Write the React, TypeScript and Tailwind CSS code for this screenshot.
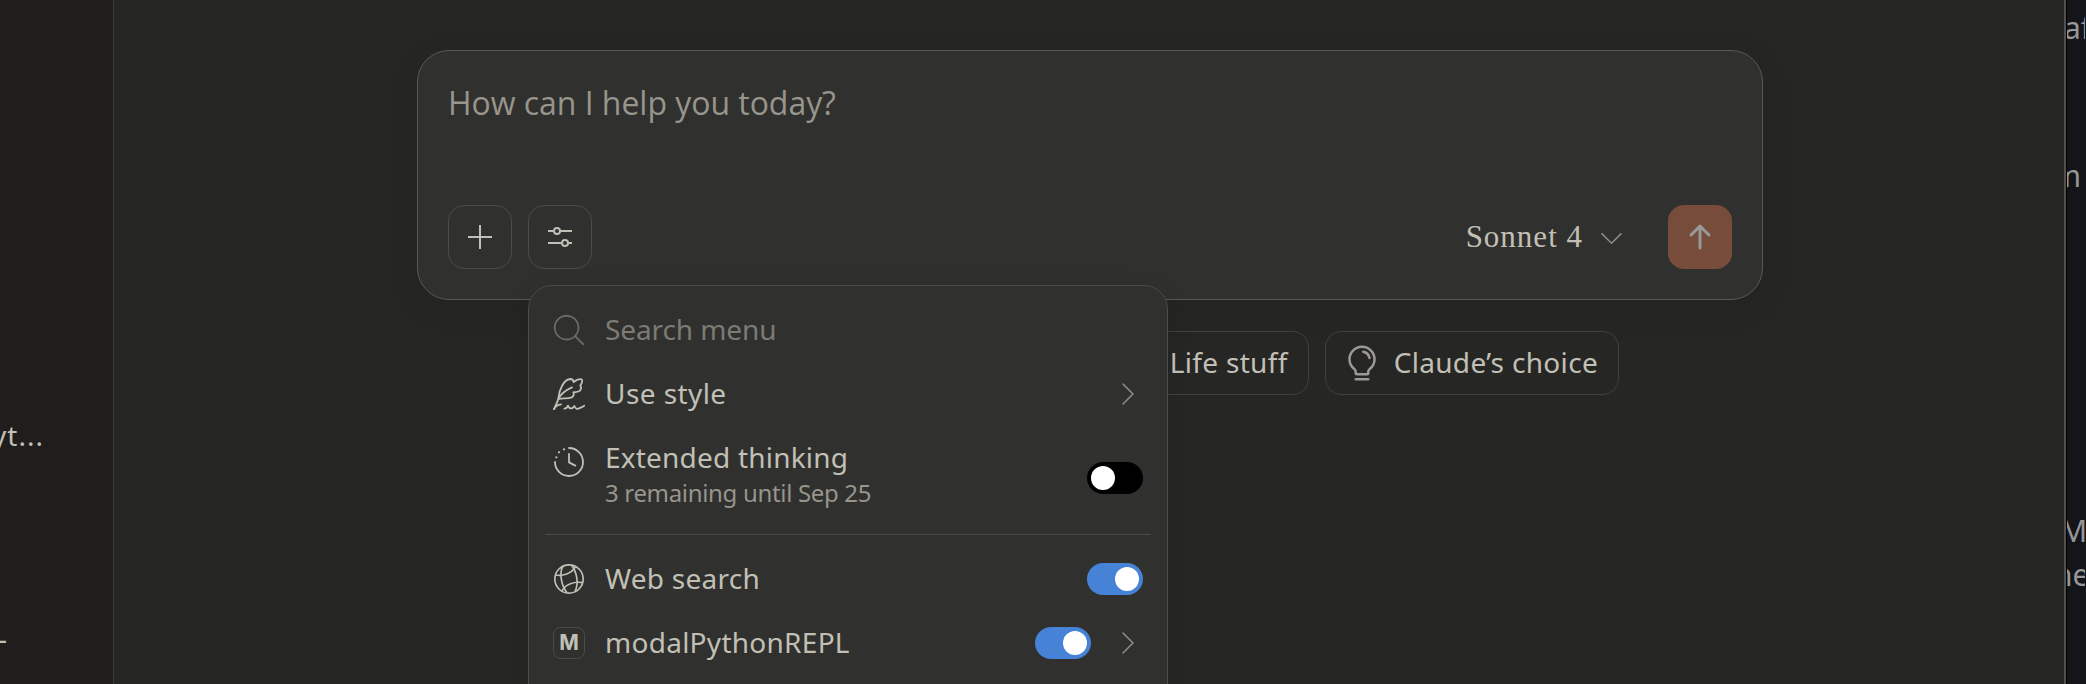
import type { ReactNode } from "react";
import {
  PiArrowUpBold,
  PiCaretDownLight,
  PiCaretRightLight,
  PiLightbulb,
  PiMagnifyingGlassLight,
} from "react-icons/pi";

function SlidersIcon() {
  return (
    <svg viewBox="0 0 24 24" className="size-6" fill="none" stroke="currentColor" strokeWidth="2">
      <path d="M0 6h5M12.5 6H24M0 18h13M20.5 18H24" />
      <circle cx="9" cy="6" r="3" />
      <circle cx="17" cy="18" r="3" />
    </svg>
  );
}

function PlusIcon() {
  return (
    <svg viewBox="0 0 24 24" className="size-6" fill="none" stroke="currentColor" strokeWidth="2">
      <path d="M12 0v24M0 12h24" />
    </svg>
  );
}

function QuillIcon() {
  return (
    <svg
      viewBox="0 0 96 96"
      className="size-8"
      fill="none"
      stroke="currentColor"
      strokeWidth="5.4"
      strokeLinecap="round"
      strokeLinejoin="round"
    >
      <path d="M3 93C9 82 14 80 24 79" />
      <path d="M3 93C11 76 14 70 16 62C18 34 33 4 52 3C59 3 61 7 62 12C70 5 80 2 86 4C91 8 86 16 82 23C86 29 84 36 78 40C73 43 65 42 61 43C64 48 62 55 56 58C44 63 30 60 16 63" />
      <path d="M16 62C25 46 39 36 57 28" />
      <path d="M34 92C39 92 43 88 45 83C49 94 58 94 64 84C68 94 74 94 79 91C84 88 90 87 94 83" />
    </svg>
  );
}

function TimerIcon() {
  return (
    <svg
      viewBox="0 0 96 96"
      className="size-8"
      fill="none"
      stroke="currentColor"
      strokeWidth="5.4"
      strokeLinecap="round"
      strokeLinejoin="round"
    >
      <path d="M48 6A42 42 0 1 1 6 48" />
      <path d="M48 24V49L67 59" />
      <g fill="currentColor" stroke="none">
        <circle cx="10" cy="34" r="3.4" />
        <circle cx="18" cy="19" r="3.4" />
        <circle cx="33" cy="10" r="3.4" />
      </g>
    </svg>
  );
}

function GlobeIcon() {
  return (
    <svg viewBox="0 0 96 96" className="size-8" fill="none" stroke="currentColor" strokeWidth="5">
      <circle cx="48" cy="48" r="42.5" />
      <path d="M30 10C18 28 24 66 42 89" />
      <path d="M55 6C72 28 78 60 66 86" />
      <path d="M8 36C28 40 56 32 68 11" />
      <path d="M27 84C36 64 64 54 90 59" />
    </svg>
  );
}

function Toggle({ on = false }: { on?: boolean }) {
  return (
    <span
      className={
        on
          ? "flex h-8 w-14 items-center justify-end rounded-full bg-[#4682d5] p-1"
          : "flex h-8 w-14 items-center rounded-full bg-black p-1"
      }
    >
      <span className="size-6 rounded-full bg-white" />
    </span>
  );
}

function MenuRow({ icon, label, children }: { icon: ReactNode; label: ReactNode; children?: ReactNode }) {
  return (
    <div className="flex h-16 items-center px-2">
      <span className="flex size-8 items-center justify-center">{icon}</span>
      <span className="ml-5 flex-1 pb-0.5">{label}</span>
      {children}
    </div>
  );
}

function ToolsMenu() {
  return (
    <div className="absolute top-[285px] left-[414px] h-[430px] w-[640px] rounded-3xl border border-[#4b4a48] bg-[#30302e] px-4 pt-3 text-[28px] leading-8 whitespace-nowrap text-[#c2c0b6] shadow-[0_4px_24px_rgba(0,0,0,0.08)]">
      <MenuRow
        icon={<PiMagnifyingGlassLight className="size-[38px] shrink-0 text-[#6b6a65]" />}
        label={<span className="tracking-[-0.1px] text-[#7c7b74]">Search menu</span>}
      />
      <MenuRow icon={<QuillIcon />} label={<span className="tracking-[0.42px]">Use style</span>}>
        <PiCaretRightLight className="size-8 text-[#8f8d86]" />
      </MenuRow>
      <div className="flex h-[92px] px-2 pt-[15px]">
        <span className="mt-[5px]">
          <TimerIcon />
        </span>
        <div className="ml-5 flex flex-1 flex-col">
          <span className="tracking-[0.2px]">Extended thinking</span>
          <span className="mt-1 text-2xl leading-8 tracking-[-0.33px] text-[#97958c]">3 remaining until Sep 25</span>
        </div>
        <span className="mt-[21px]">
          <Toggle />
        </span>
      </div>
      <div className="mt-4 mb-3 h-px bg-[#4b4a48]" />
      <MenuRow icon={<GlobeIcon />} label={<span className="tracking-[0.27px]">Web search</span>}>
        <Toggle on />
      </MenuRow>
      <MenuRow
        icon={
          <span className="flex size-8 items-center justify-center rounded-lg border border-[#4b4a48] font-['Inter'] text-[21px] font-bold">
            M
          </span>
        }
        label={<span className="tracking-[0.27px]">modalPythonREPL</span>}
      >
        <Toggle on />
        <PiCaretRightLight className="ml-5 size-8 text-[#8f8d86]" />
      </MenuRow>
    </div>
  );
}

function Composer() {
  return (
    <div className="mx-auto flex h-[250px] w-[1346px] flex-col justify-between rounded-[32px] border border-[#5a5956] bg-[#30302e] p-[30px] shadow-[0_8px_40px_rgba(0,0,0,0.07)]">
      <div className="pt-[3px] font-['Open_Sans','Noto_Sans',sans-serif] text-[32px] leading-[38px] tracking-[-0.04px] text-[#97958c]">
        How can I help you today?
      </div>
      <div className="flex items-center gap-4 text-[#c2c0b6]">
        <button className="flex size-16 items-center justify-center rounded-2xl border border-[#4b4a48]">
          <PlusIcon />
        </button>
        <button className="flex size-16 items-center justify-center rounded-2xl border border-[#4b4a48]">
          <SlidersIcon />
        </button>
        <div className="ml-auto flex items-center">
          <span className="font-['Liberation_Serif',serif] text-[31px] tracking-[1px]">Sonnet 4</span>
          <PiCaretDownLight className="ml-[13px] size-[31px] text-[#8f8d86]" />
        </div>
        <button className="ml-[25px] flex size-16 items-center justify-center rounded-2xl bg-[#774c3b] text-[#989897]">
          <PiArrowUpBold className="size-8" />
        </button>
      </div>
    </div>
  );
}

function Suggestion({ icon, children }: { icon?: ReactNode; children: ReactNode }) {
  return (
    <button className="flex h-16 items-center rounded-2xl border border-[#41403d] pr-5 pl-4 text-[28px] whitespace-nowrap text-[#c2c0b6]">
      <span className="mr-3 flex size-10 items-center justify-center">{icon}</span>
      <span className="pb-0.5 tracking-[0.32px]">{children}</span>
    </button>
  );
}

export default function App() {
  return (
    <div className="relative flex h-[684px] w-full overflow-hidden bg-[#262624] font-['Noto_Sans',sans-serif]">
      <aside className="flex w-[114px] shrink-0 flex-col overflow-hidden border-r border-[#3d3c3a] bg-[#1f1e1d] text-[28px] leading-10 whitespace-nowrap text-[#c2c0b6]">
        <div className="mt-[415px] flex w-[44px] justify-end tracking-[1px]">yt...</div>
        <div className="mt-[163px] flex w-[7px] justify-end">–</div>
      </aside>
      <main className="relative min-w-0 flex-1 overflow-hidden">
        <div className="w-[1952px] pt-[50px]">
          <Composer />
          <div className="mt-[31px] flex w-[1505px] justify-end gap-4">
            <Suggestion>Life stuff</Suggestion>
            <Suggestion icon={<PiLightbulb className="size-10 text-[#9c9a92]" />}>Claude’s choice</Suggestion>
          </div>
        </div>
        <ToolsMenu />
      </main>
      <aside className="flex w-[22px] shrink-0 flex-col overflow-hidden border-l-2 border-[#52514e] bg-[#141519] text-[30px] leading-10 whitespace-nowrap text-[#96979a]">
        <div className="h-full w-[19px] overflow-hidden border-l border-black">
          <div className="mt-[8px] -ml-[3px]">af</div>
          <div className="mt-[108px] -ml-[14px]">m</div>
          <div className="mt-[315px] -ml-[7px]">M</div>
          <div className="mt-[4px] -ml-[13px]">ne</div>
        </div>
      </aside>
    </div>
  );
}
